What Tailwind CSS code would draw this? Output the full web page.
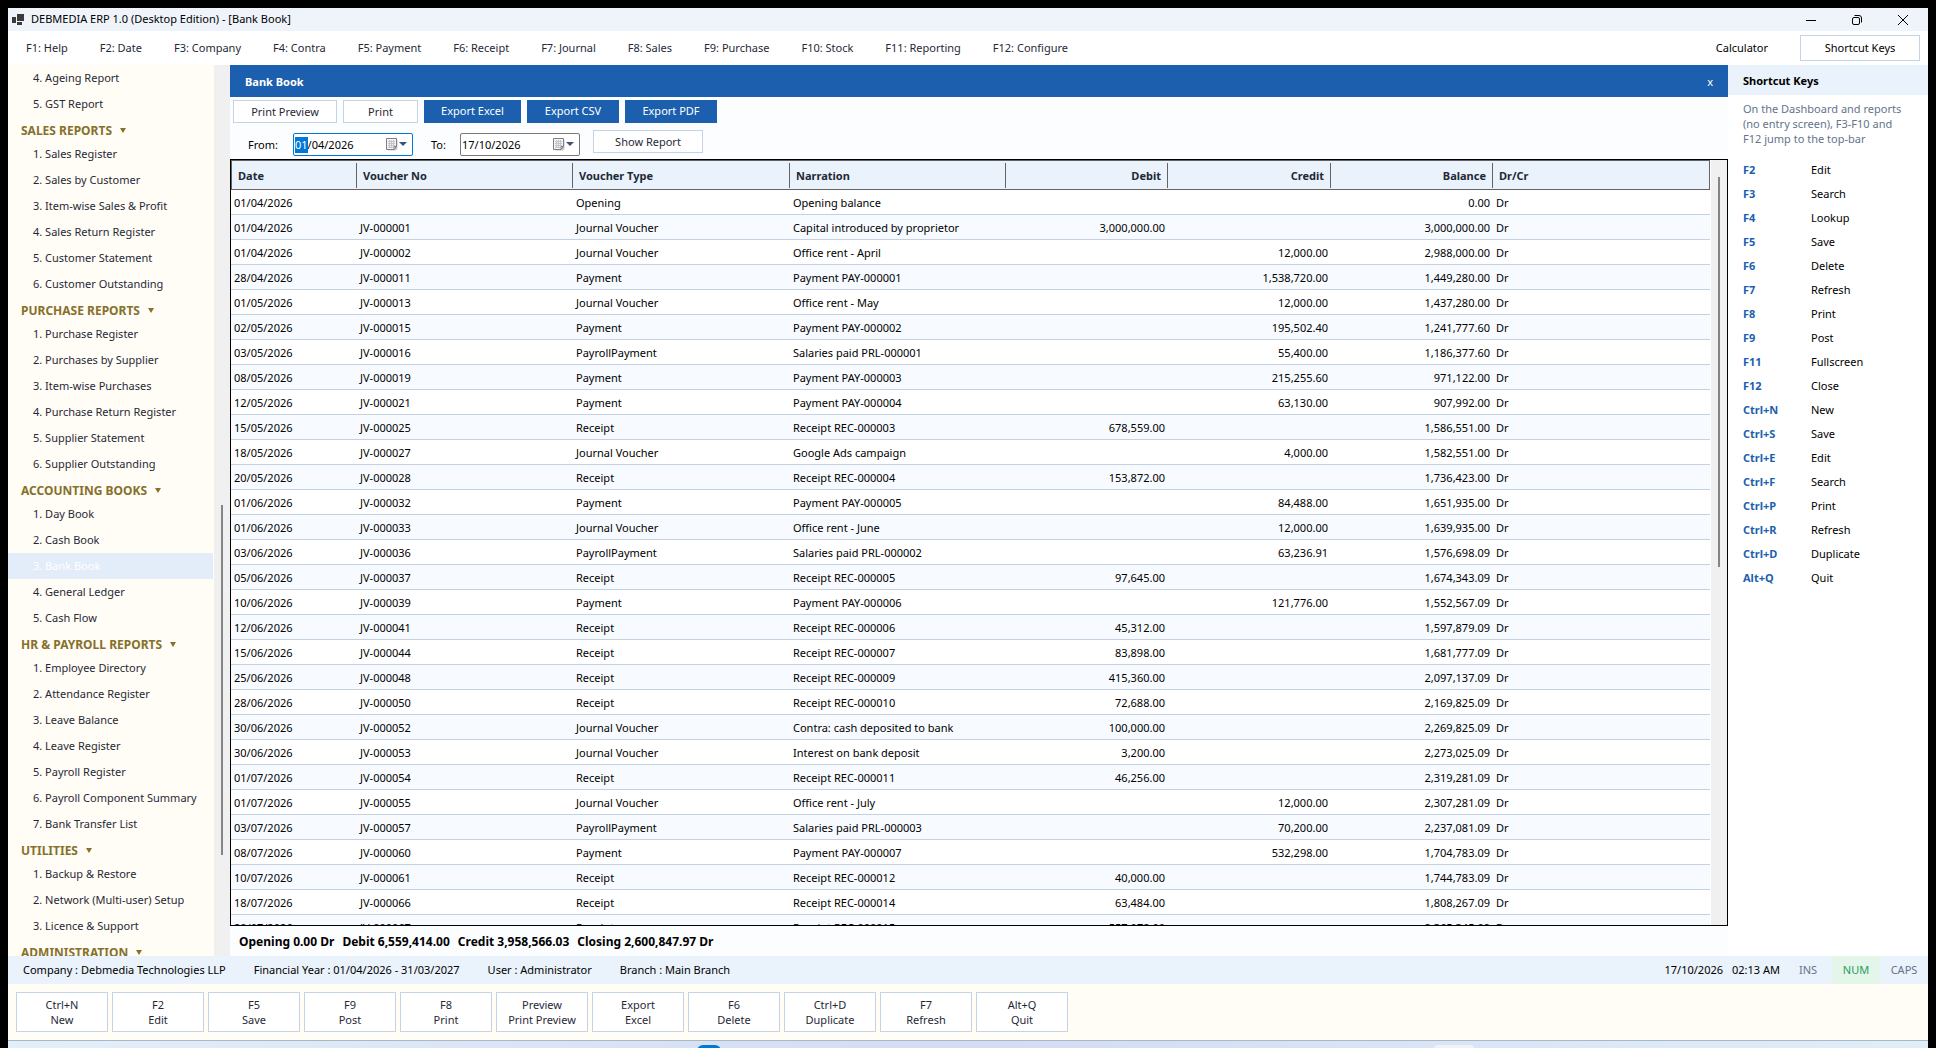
<!DOCTYPE html>
<html lang="en">
<head>
    <meta charset="UTF-8">
    <meta name="viewport" content="width=device-width, initial-scale=1.0">
    <title>DEBMEDIA ERP 1.0 (Desktop Edition) - [Bank Book]</title>
    <script src="https://cdn.jsdelivr.net/npm/@tailwindcss/browser@4"></script>
</head>

<body class="bg-black font-['Noto_Sans','Open_Sans',sans-serif] text-[11px] text-black">
    <div class="h-screen flex flex-col px-2 pt-2 overflow-hidden">

        <!-- Title bar -->
        <header class="h-[23px] shrink-0 flex items-center bg-[#eff4fb]">
            <svg class="ml-1 mr-[7px]" width="12" height="11" viewBox="0 0 12 11" fill="#3b3b3b">
                <rect x="0" y="3" width="4" height="6"/>
                <rect x="5" y="0" width="7" height="7"/>
                <rect x="5" y="8" width="5" height="3"/>
            </svg>
            <h1>DEBMEDIA ERP 1.0 (Desktop Edition) - [Bank Book]</h1>
            <div class="ml-auto flex items-center gap-9 pr-5">
                <button aria-label="Minimize"><svg width="10" height="10" viewBox="0 0 10 10" stroke="#000" fill="none"><path d="M0 5.5h10"/></svg></button>
                <button aria-label="Restore"><svg width="10" height="10" viewBox="0 0 10 10" stroke="#000" fill="none"><rect x=".5" y="2.5" width="7" height="7" rx="1.5"/><path d="M2.500 .5h4.500a2.500 2.500 0 0 1 2.500 2.500v4.500"/></svg></button>
                <button aria-label="Close"><svg width="10" height="10" viewBox="0 0 10 10" stroke="#000" fill="none"><path d="M0 0l10 10M10 0L0 10"/></svg></button>
            </div>
        </header>

        <!-- Menu bar -->
        <nav class="h-[34px] shrink-0 flex items-center bg-white pl-[18px] pr-2 text-[#1f2937]">
            <div id="menu" class="flex gap-8"></div>
            <button class="ml-auto mr-8 text-black">Calculator</button>
            <button class="w-[120px] h-[26px] border border-[#c5d3e6] text-black">Shortcut Keys</button>
        </nav>

        <div class="flex-1 min-h-0 flex">
            <!-- Left menu -->
            <aside class="w-[222px] shrink-0 flex overflow-hidden bg-[#fffdf5]">
                <div id="sidebar" class="flex-1 pr-px text-[#1f2937]"></div>
                <div class="w-4 bg-[#f0f0f0] flex justify-center pt-[440px]">
                    <div class="w-[2px] h-[350px] bg-[#858585]"></div>
                </div>
            </aside>

            <!-- Report -->
            <main class="flex-1 min-w-0 flex flex-col bg-[#fcfdff]">
                <div class="h-8 shrink-0 flex items-center justify-between bg-[#1c5fae] text-white px-[15px] pt-[2px]">
                    <h2 class="font-bold">Bank Book</h2>
                    <button aria-label="Close report">x</button>
                </div>
                <div class="flex gap-[6px] pl-[3px] pt-[3px] text-[#1f2937]">
                    <button class="w-[104px] h-[23px] pt-[2px] border border-[#c5d3e6] bg-white">Print Preview</button>
                    <button class="w-[75px] h-[23px] pt-[2px] border border-[#c5d3e6] bg-white">Print</button>
                    <button class="w-[97px] h-[23px] bg-[#1c5fae] text-white">Export Excel</button>
                    <button class="w-[92px] h-[23px] bg-[#1c5fae] text-white">Export CSV</button>
                    <button class="w-[92px] h-[23px] bg-[#1c5fae] text-white">Export PDF</button>
                </div>
                <div class="h-9 shrink-0 flex items-end pl-[18px] pb-[3px] leading-[23px]">
                    <label for="from" class="w-[45px]">From:</label>
                    <div class="w-[120px] h-[23px] flex items-center gap-px bg-white border border-[#7a7a7a] rounded-[2px] px-[1px] focus-within:border-[#0078d7]">
                        <input id="from" type="text" value="01/04/2026" class="w-[90px] leading-4 outline-none selection:bg-[#0078d7] selection:text-white">
                        <svg width="22" height="13" viewBox="0 0 22 13"><use href="#calendar"/></svg>
                    </div>
                    <label for="to" class="w-[29px] ml-[18px]">To:</label>
                    <div class="w-[120px] h-[23px] flex items-center gap-px bg-white border border-[#7a7a7a] rounded-[2px] px-[1px]">
                        <input id="to" type="text" value="17/10/2026" class="w-[90px] leading-4 outline-none">
                        <svg width="22" height="13" viewBox="0 0 22 13"><use href="#calendar"/></svg>
                    </div>
                    <button class="ml-[13px] mb-[3px] w-[110px] h-[23px] leading-[21px] border border-[#c5d3e6] bg-white text-[#1f2937]">Show Report</button>
                </div>

                <div class="flex-1 min-h-0 flex border border-black bg-white">
                    <div class="flex-1 min-w-0 overflow-hidden pr-px">
                        <table class="w-full table-fixed border-separate border-spacing-0">
                            <colgroup>
                                <col class="w-[126px]">
                                <col class="w-[216px]">
                                <col class="w-[217px]">
                                <col class="w-[216px]">
                                <col class="w-[162px]">
                                <col class="w-[163px]">
                                <col class="w-[162px]">
                                <col>
                            </colgroup>
                            <thead>
                                <tr id="head" class="bg-[#eaf2fb] text-[#1f2937]"></tr>
                            </thead>
                            <tbody id="rows"></tbody>
                        </table>
                    </div>
                    <div class="w-4 bg-[#f0f0f0] flex justify-center pt-[17px]">
                        <div class="w-[2px] h-[390px] bg-[#858585]"></div>
                    </div>
                </div>

                <div class="h-[30px] shrink-0 flex items-center gap-2 pl-[9px] pt-[2px] text-xs font-bold">
                    <span>Opening 0.00 Dr</span>
                    <span>Debit 6,559,414.00</span>
                    <span>Credit 3,958,566.03</span>
                    <span>Closing 2,600,847.97 Dr</span>
                </div>
            </main>

            <!-- Shortcut keys -->
            <aside class="w-[200px] shrink-0 bg-white">
                <h2 class="h-[30px] flex items-center pl-[15px] pt-[2px] bg-[#eaf2fb] font-bold">Shortcut Keys</h2>
                <p class="px-[15px] pt-[6px] pb-3 leading-[15px] whitespace-nowrap text-[#64748b]">On the Dashboard and reports<br>(no entry screen), F3-F10 and<br>F12 jump to the top-bar</p>
                <dl id="shortcuts" class="grid grid-cols-[68px_1fr] pl-[15px] leading-6"></dl>
            </aside>
        </div>

        <!-- Status bar -->
        <div class="h-7 shrink-0 flex items-center gap-7 bg-[#eaf2fb] pl-[15px]">
            <span>Company : Debmedia Technologies LLP</span>
            <span>Financial Year : 01/04/2026 - 31/03/2027</span>
            <span>User : Administrator</span>
            <span>Branch : Main Branch</span>
            <div class="ml-auto flex items-center text-center leading-7">
                <span class="mr-[9px]">17/10/2026</span>
                <span class="mr-[4px]">02:13 AM</span>
                <span class="w-12 text-[#64748b]">INS</span>
                <span class="w-12 bg-[#e4f5ea] text-[#2a9d5c]">NUM</span>
                <span class="w-12 text-[#64748b]">CAPS</span>
            </div>
        </div>

        <!-- Action buttons -->
        <div id="actions" class="h-14 shrink-0 flex items-center gap-1 bg-[#fffdf5] px-2 text-[#1f2937]"></div>

        <!-- Desktop taskbar edge -->
        <div class="h-2 shrink-0 relative border-t border-[#a9b7c6] bg-linear-to-r from-[#e3eff8] via-[#d3dcf3] to-[#e0eef7]">
            <div class="absolute left-[689px] top-[4px] w-6 h-2 rounded-t-[6px] bg-[#0078d4]"></div>
            <div class="absolute left-[1426px] top-[4px] w-10 h-3 rounded-t-[4px] bg-[#eef3fa]"></div>
        </div>
    </div>

    <svg class="hidden">
        <symbol id="calendar" viewBox="0 0 22 13">
            <path d="M2 1.500h9.500v9l-1.500 2H2z" fill="#c9c9c9"/>
            <path d="M.5 .5h10v8l-2.500 3H.5z" fill="#f4f4f6" stroke="#857c7c"/>
            <path d="M8 11.500v-3h2.500" fill="none" stroke="#857c7c"/>
            <path d="M2 3.500h7M2 5.500h7M2 7.500h7M2 9.500h5M3.500 2v8M5.500 2v8M7.500 2v7" stroke="#c0c5cf"/>
            <path d="M13 4h8l-4 4z" fill="#3d5277"/>
        </symbol>
    </svg>

    <script>
    const menu = ['F1: Help', 'F2: Date', 'F3: Company', 'F4: Contra', 'F5: Payment', 'F6: Receipt', 'F7: Journal', 'F8: Sales', 'F9: Purchase', 'F10: Stock', 'F11: Reporting', 'F12: Configure'];

    const sidebar = [
      ['', ['4. Ageing Report', '5. GST Report']],
      ['SALES REPORTS', ['1. Sales Register', '2. Sales by Customer', '3. Item-wise Sales & Profit', '4. Sales Return Register', '5. Customer Statement', '6. Customer Outstanding']],
      ['PURCHASE REPORTS', ['1. Purchase Register', '2. Purchases by Supplier', '3. Item-wise Purchases', '4. Purchase Return Register', '5. Supplier Statement', '6. Supplier Outstanding']],
      ['ACCOUNTING BOOKS', ['1. Day Book', '2. Cash Book', '3. Bank Book', '4. General Ledger', '5. Cash Flow']],
      ['HR & PAYROLL REPORTS', ['1. Employee Directory', '2. Attendance Register', '3. Leave Balance', '4. Leave Register', '5. Payroll Register', '6. Payroll Component Summary', '7. Bank Transfer List']],
      ['UTILITIES', ['1. Backup & Restore', '2. Network (Multi-user) Setup', '3. Licence & Support']],
      ['ADMINISTRATION', []]
    ];

    const headings = ['Date', 'Voucher No', 'Voucher Type', 'Narration', 'Debit', 'Credit', 'Balance', 'Dr/Cr'];

    // date, voucher no, type, narration, debit, credit, balance
    const rows = [
      ['01/04/2026', '', 'Opening', 'Opening balance', '', '', '0.00'],
      ['01/04/2026', 'JV-000001', 'Journal Voucher', 'Capital introduced by proprietor', '3,000,000.00', '', '3,000,000.00'],
      ['01/04/2026', 'JV-000002', 'Journal Voucher', 'Office rent - April', '', '12,000.00', '2,988,000.00'],
      ['28/04/2026', 'JV-000011', 'Payment', 'Payment PAY-000001', '', '1,538,720.00', '1,449,280.00'],
      ['01/05/2026', 'JV-000013', 'Journal Voucher', 'Office rent - May', '', '12,000.00', '1,437,280.00'],
      ['02/05/2026', 'JV-000015', 'Payment', 'Payment PAY-000002', '', '195,502.40', '1,241,777.60'],
      ['03/05/2026', 'JV-000016', 'PayrollPayment', 'Salaries paid PRL-000001', '', '55,400.00', '1,186,377.60'],
      ['08/05/2026', 'JV-000019', 'Payment', 'Payment PAY-000003', '', '215,255.60', '971,122.00'],
      ['12/05/2026', 'JV-000021', 'Payment', 'Payment PAY-000004', '', '63,130.00', '907,992.00'],
      ['15/05/2026', 'JV-000025', 'Receipt', 'Receipt REC-000003', '678,559.00', '', '1,586,551.00'],
      ['18/05/2026', 'JV-000027', 'Journal Voucher', 'Google Ads campaign', '', '4,000.00', '1,582,551.00'],
      ['20/05/2026', 'JV-000028', 'Receipt', 'Receipt REC-000004', '153,872.00', '', '1,736,423.00'],
      ['01/06/2026', 'JV-000032', 'Payment', 'Payment PAY-000005', '', '84,488.00', '1,651,935.00'],
      ['01/06/2026', 'JV-000033', 'Journal Voucher', 'Office rent - June', '', '12,000.00', '1,639,935.00'],
      ['03/06/2026', 'JV-000036', 'PayrollPayment', 'Salaries paid PRL-000002', '', '63,236.91', '1,576,698.09'],
      ['05/06/2026', 'JV-000037', 'Receipt', 'Receipt REC-000005', '97,645.00', '', '1,674,343.09'],
      ['10/06/2026', 'JV-000039', 'Payment', 'Payment PAY-000006', '', '121,776.00', '1,552,567.09'],
      ['12/06/2026', 'JV-000041', 'Receipt', 'Receipt REC-000006', '45,312.00', '', '1,597,879.09'],
      ['15/06/2026', 'JV-000044', 'Receipt', 'Receipt REC-000007', '83,898.00', '', '1,681,777.09'],
      ['25/06/2026', 'JV-000048', 'Receipt', 'Receipt REC-000009', '415,360.00', '', '2,097,137.09'],
      ['28/06/2026', 'JV-000050', 'Receipt', 'Receipt REC-000010', '72,688.00', '', '2,169,825.09'],
      ['30/06/2026', 'JV-000052', 'Journal Voucher', 'Contra: cash deposited to bank', '100,000.00', '', '2,269,825.09'],
      ['30/06/2026', 'JV-000053', 'Journal Voucher', 'Interest on bank deposit', '3,200.00', '', '2,273,025.09'],
      ['01/07/2026', 'JV-000054', 'Receipt', 'Receipt REC-000011', '46,256.00', '', '2,319,281.09'],
      ['01/07/2026', 'JV-000055', 'Journal Voucher', 'Office rent - July', '', '12,000.00', '2,307,281.09'],
      ['03/07/2026', 'JV-000057', 'PayrollPayment', 'Salaries paid PRL-000003', '', '70,200.00', '2,237,081.09'],
      ['08/07/2026', 'JV-000060', 'Payment', 'Payment PAY-000007', '', '532,298.00', '1,704,783.09'],
      ['10/07/2026', 'JV-000061', 'Receipt', 'Receipt REC-000012', '40,000.00', '', '1,744,783.09'],
      ['18/07/2026', 'JV-000066', 'Receipt', 'Receipt REC-000014', '63,484.00', '', '1,808,267.09'],
      ['20/07/2026', 'JV-000067', 'Receipt', 'Receipt REC-000015', '557,078.00', '', '2,365,345.09']
    ];

    const shortcuts = [['F2', 'Edit'], ['F3', 'Search'], ['F4', 'Lookup'], ['F5', 'Save'], ['F6', 'Delete'], ['F7', 'Refresh'], ['F8', 'Print'], ['F9', 'Post'], ['F11', 'Fullscreen'], ['F12', 'Close'], ['Ctrl+N', 'New'], ['Ctrl+S', 'Save'], ['Ctrl+E', 'Edit'], ['Ctrl+F', 'Search'], ['Ctrl+P', 'Print'], ['Ctrl+R', 'Refresh'], ['Ctrl+D', 'Duplicate'], ['Alt+Q', 'Quit']];

    const actions = [['Ctrl+N', 'New'], ['F2', 'Edit'], ['F5', 'Save'], ['F9', 'Post'], ['F8', 'Print'], ['Preview', 'Print Preview'], ['Export', 'Excel'], ['F6', 'Delete'], ['Ctrl+D', 'Duplicate'], ['F7', 'Refresh'], ['Alt+Q', 'Quit']];

    const esc = (s) => s.replace('&', '&amp;');
    const isNumber = (i) => i >= 4 && i <= 6;

    document.getElementById('menu').innerHTML = menu.map(m => `<button>${m}</button>`).join('');

    document.getElementById('sidebar').innerHTML = sidebar.map(([title, items]) => {
      const head = title ? `<h3 class="h-6 flex items-center gap-2 pl-[13px] pt-[3px] text-xs font-bold whitespace-nowrap text-[#86702c]">${esc(title)}<svg width="6" height="5" viewBox="0 0 6 5" fill="#86702c"><path d="M0 0h6L3 5z"/></svg></h3>` : '';
      return head + items.map(i => `<a href="#" class="${i === '3. Bank Book' ? 'h-[26px] flex items-center pl-[25px] whitespace-nowrap bg-[#e3edfa] text-white' : 'h-[26px] flex items-center pl-[25px] whitespace-nowrap'}">${esc(i)}</a>`).join('');
    }).join('');

    document.getElementById('head').innerHTML = headings.map((h, i) => {
      const edge = i === 0 ? 'border-l' : i === 7 ? 'border-r' : '';
      const line = i === 7 ? '' : 'border-r';
      return `<th class="h-[30px] p-0 border-y border-[#646464] ${edge}"><div class="h-[25px] leading-[25px] px-[6px] border-[#646464] ${line} ${isNumber(i) ? 'text-right' : 'text-left'}">${h}</div></th>`;
    }).join('');

    document.getElementById('rows').innerHTML = rows.map(r => {
      const cells = [...r, 'Dr'].map((c, i) => `<td class="h-[25px] px-[3px] pt-[2px] pb-0 border-b border-[#c3d1e3] ${isNumber(i) ? 'text-right' : 'text-left'}">${c}</td>`).join('');
      return `<tr class="even:bg-[#f7fbff]">${cells}</tr>`;
    }).join('');

    document.getElementById('shortcuts').innerHTML = shortcuts.map(([k, v]) => `<dt class="font-bold text-[#1c5fae]">${k}</dt><dd>${v}</dd>`).join('');

    document.getElementById('actions').innerHTML = actions.map(([k, v]) => `<button class="w-[92px] h-10 border border-[#c5d3e6] bg-white leading-[15px]">${k}<br>${v}</button>`).join('');

    const from = document.getElementById('from');
    from.focus();
    from.setSelectionRange(0, 2);
    </script>
</body>
</html>
